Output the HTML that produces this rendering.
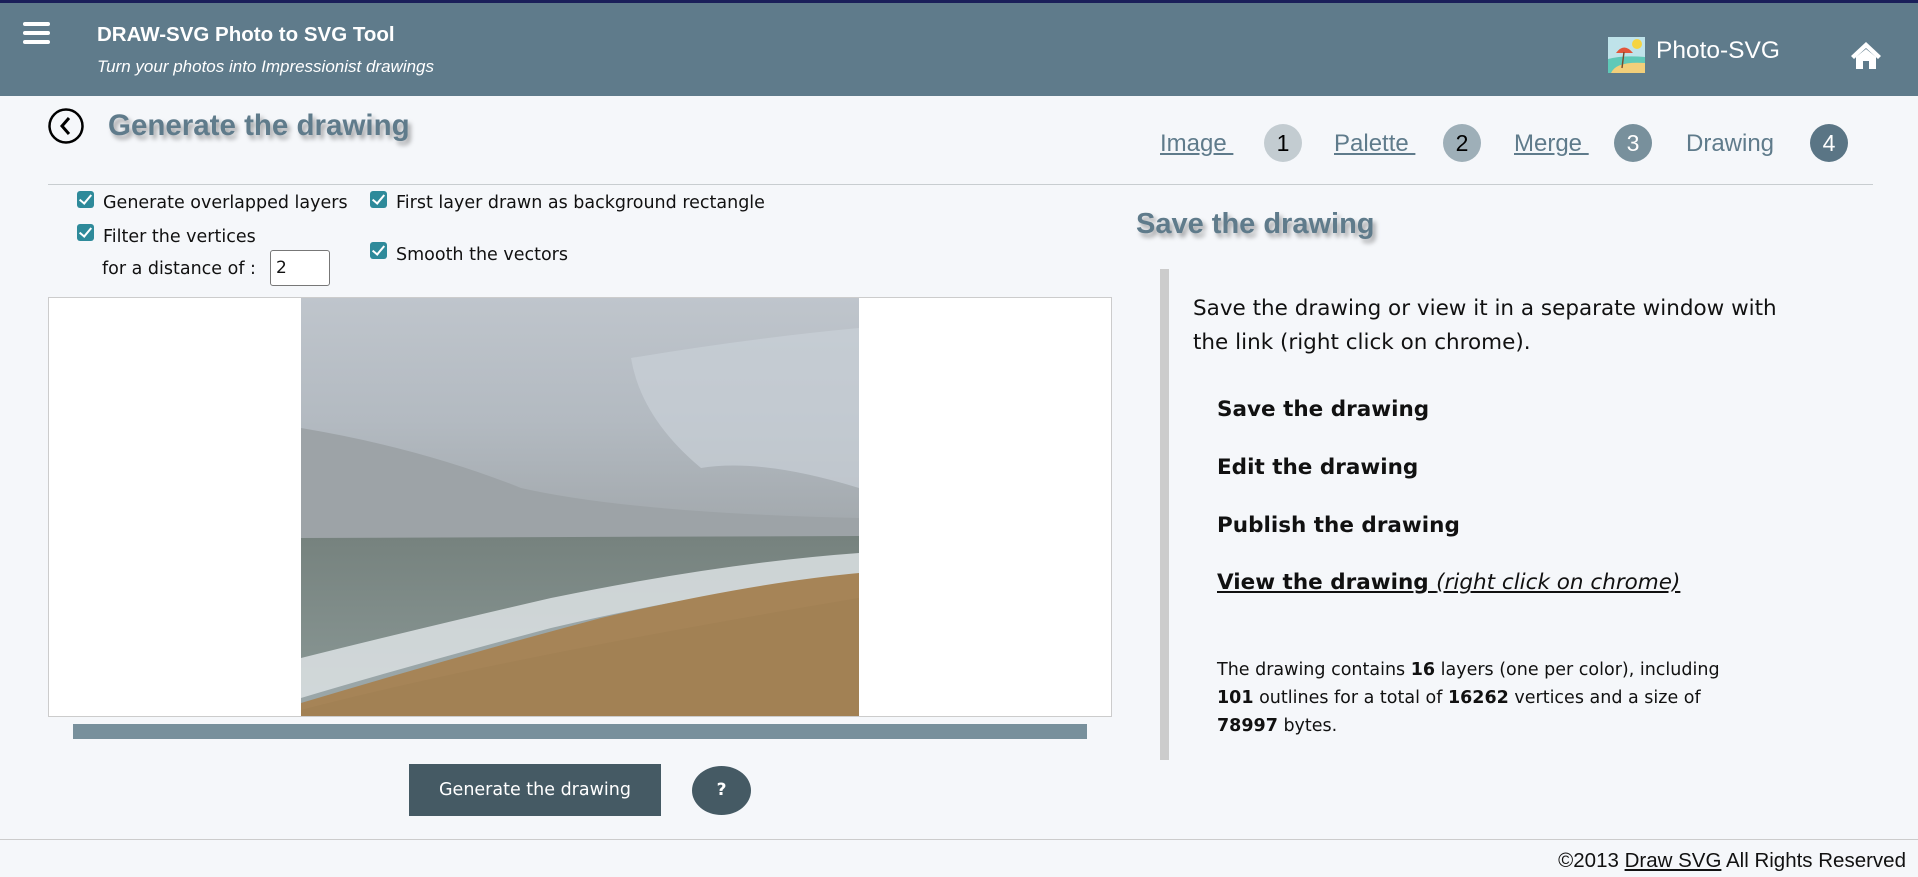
<!DOCTYPE html>
<html><head><meta charset="utf-8"><style>
*{margin:0;padding:0;box-sizing:border-box}
body{width:1918px;height:877px;background:#f5f7fa;font-family:"DejaVu Sans",sans-serif;color:#111;position:relative;overflow:hidden}
.a{position:absolute;white-space:nowrap}
.hdr{position:absolute;left:0;top:0;width:1918px;height:96px;background:#5f7b8b;border-top:3px solid #1a1f5a}
.h2{font-family:"Liberation Sans",sans-serif;font-weight:bold;font-size:29.5px;color:#5f7b8b;text-shadow:3px 4px 5px rgba(0,0,0,.35)}
.cb{position:absolute;width:17px;height:17px;background:#2e8a9a;border-radius:3px}
.cb:after{content:"";position:absolute;left:5px;top:1px;width:5px;height:10px;border:solid #fff;border-width:0 2px 2px 0;transform:rotate(40deg)}
.lbl{font-size:17.5px}
.step{font-family:"Liberation Sans",sans-serif;font-size:24px;color:#5f7b8b;text-decoration:underline}
.num{position:absolute;width:38px;height:38px;border-radius:50%;text-align:center;line-height:38px;font-family:"Liberation Sans",sans-serif;font-size:23px}
.lk{font-weight:bold;font-size:21.5px}
</style></head><body>
<div class="hdr"></div>
<div class="a" style="left:23px;top:22px;width:27px;height:4px;background:#fff;border-radius:2px"></div>
<div class="a" style="left:23px;top:31px;width:27px;height:4px;background:#fff;border-radius:2px"></div>
<div class="a" style="left:23px;top:40px;width:27px;height:4px;background:#fff;border-radius:2px"></div>
<div class="a" style="left:97px;top:23px;font-family:'Liberation Sans',sans-serif;font-weight:bold;font-size:20.5px;color:#fff">DRAW-SVG Photo to SVG Tool</div>
<div class="a" style="left:97px;top:57px;font-family:'Liberation Sans',sans-serif;font-style:italic;font-size:17px;color:#fff">Turn your photos into Impressionist drawings</div>
<svg class="a" style="left:1608px;top:37px" width="37" height="36" viewBox="0 0 37 36"><rect width="37" height="36" fill="#bfe3ea"/><circle cx="29" cy="7" r="5" fill="#f5d442"/><path d="M0 22 Q15 18 37 20 V36 H0Z" fill="#5fc9b8"/><path d="M3 36 Q8 24 37 26 V36Z" fill="#f2cf7a"/><path d="M8 16 Q16 5 25 16Z" fill="#e2553a"/><line x1="16" y1="15" x2="14" y2="31" stroke="#7a4a2a" stroke-width="1.4"/></svg>
<div class="a" style="left:1656px;top:37px;font-family:'Liberation Sans',sans-serif;font-size:24.5px;color:#fff">Photo-SVG</div>
<svg class="a" style="left:1850px;top:40px" width="32" height="30" viewBox="0 0 32 30"><path d="M16 2 L1 16 L4 19 L16 8 L28 19 L31 16Z" fill="#fff"/><path d="M6 17 L16 9 L26 17 V29 H19 V21 H13 V29 H6Z" fill="#fff"/></svg>

<svg class="a" style="left:47px;top:107px" width="38" height="38"><circle cx="19" cy="19" r="16.5" fill="none" stroke="#000" stroke-width="2.5"/><path d="M22 11 L15 19 L22 27" fill="none" stroke="#000" stroke-width="3"/></svg>
<div class="a h2" style="left:108px;top:109px">Generate the drawing</div>

<div class="a step" style="left:1160px;top:130px">Image&nbsp;</div>
<div class="num" style="left:1264px;top:124px;background:#c3ccd1;color:#000">1</div>
<div class="a step" style="left:1334px;top:130px">Palette&nbsp;</div>
<div class="num" style="left:1443px;top:124px;background:#9eafb8;color:#000">2</div>
<div class="a step" style="left:1514px;top:130px">Merge&nbsp;</div>
<div class="num" style="left:1614px;top:124px;background:#78909c;color:#fff">3</div>
<div class="a step" style="left:1686px;top:130px;text-decoration:none">Drawing</div>
<div class="num" style="left:1810px;top:124px;background:#5a7585;color:#fff">4</div>
<div class="a" style="left:48px;top:184px;width:1825px;height:1px;background:#c8cdd0"></div>

<div class="cb" style="left:77px;top:191px"></div><div class="a lbl" style="left:103px;top:193px">Generate overlapped layers</div>
<div class="cb" style="left:77px;top:224px"></div><div class="a lbl" style="left:103px;top:227px">Filter the vertices</div>
<div class="a lbl" style="left:102px;top:259px">for a distance of :</div>
<div class="a" style="left:270px;top:250px;width:60px;height:36px;background:#fff;border:1px solid #777;border-radius:3px;font-size:17px;padding:7px 5px">2</div>
<div class="cb" style="left:370px;top:191px"></div><div class="a lbl" style="left:396px;top:193px">First layer drawn as background rectangle</div>
<div class="cb" style="left:370px;top:242px"></div><div class="a lbl" style="left:396px;top:245px">Smooth the vectors</div>

<div class="a" style="left:48px;top:297px;width:1064px;height:420px;background:#fff;border:1px solid #ccc"></div>
<svg class="a" style="left:301px;top:298px" width="558" height="418" viewBox="0 0 558 418">
<defs><linearGradient id="s" x1="0" y1="0" x2="0" y2="1"><stop offset="0" stop-color="#bfc5cc"/><stop offset=".5" stop-color="#b3bac1"/><stop offset="1" stop-color="#a0a6aa"/></linearGradient>
<linearGradient id="w" x1="0" y1="0" x2="0" y2="1"><stop offset="0" stop-color="#76827e"/><stop offset="1" stop-color="#8c9a98"/></linearGradient></defs>
<rect width="558" height="245" fill="url(#s)"/>
<path d="M330 60 Q450 40 558 30 V190 Q460 160 400 170 Q340 120 330 60Z" fill="#c9d0d7" opacity=".7"/>
<path d="M0 130 Q120 150 220 190 Q330 215 558 220 V245 H0Z" fill="#9da3a7"/>
<path d="M0 240 L558 238 V418 H0Z" fill="url(#w)"/>
<path d="M0 360 Q120 330 250 300 Q420 265 558 255 V418 H0Z" fill="#e2e7ea" opacity=".8"/>
<path d="M0 400 Q100 370 250 330 Q420 290 558 280 V418 H0Z" fill="#9aa6a8"/>
<path d="M0 418 V405 Q150 360 300 320 Q450 285 558 275 V418Z" fill="#a68457"/>
<path d="M0 418 V412 Q200 360 558 300 V418Z" fill="#9e7d52" opacity=".5"/>
</svg>
<div class="a" style="left:73px;top:724px;width:1014px;height:15px;background:#78909c"></div>
<div class="a" style="left:409px;top:764px;width:252px;height:52px;background:#455a64;color:#fff;font-size:17.5px;text-align:center;line-height:52px">Generate the drawing</div>
<div class="a" style="left:692px;top:766px;width:59px;height:49px;border-radius:50%;background:#455a64;color:#fff;font-weight:bold;font-size:17px;text-align:center;line-height:49px">?</div>

<div class="a h2" style="left:1136px;top:208px;font-size:29px">Save the drawing</div>
<div class="a" style="left:1160px;top:269px;width:9px;height:491px;background:#ccc"></div>
<div class="a" style="left:1193px;top:292px;font-size:21.5px;line-height:34px;white-space:normal;width:625px">Save the drawing or view it in a separate window with the link (right click on chrome).</div>
<div class="a lk" style="left:1217px;top:397px">Save the drawing</div>
<div class="a lk" style="left:1217px;top:455px">Edit the drawing</div>
<div class="a lk" style="left:1217px;top:513px">Publish the drawing</div>
<div class="a lk" style="left:1217px;top:570px;text-decoration:underline">View the drawing <i style="font-weight:normal">(right click on chrome)</i></div>
<div class="a" style="left:1217px;top:656px;font-size:17.5px;line-height:28px;white-space:normal;width:535px">The drawing contains <b>16</b> layers (one per color), including <b>101</b> outlines for a total of <b>16262</b> vertices and a size of <b>78997</b> bytes.</div>

<div class="a" style="left:0;top:839px;width:1918px;height:1px;background:#ccc"></div>
<div class="a" style="right:12px;top:849px;font-family:'Liberation Sans',sans-serif;font-size:20.5px">©2013 <u>Draw SVG</u> All Rights Reserved</div>
</body></html>
